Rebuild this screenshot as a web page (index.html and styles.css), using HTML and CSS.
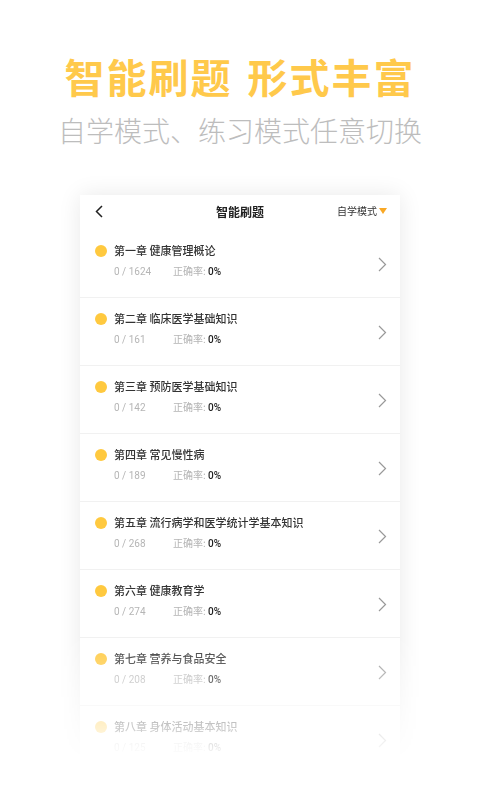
FILE: index.html
```html
<!DOCTYPE html>
<html lang="zh-CN">
<head>
    <meta charset="UTF-8">
    <meta name="viewport" content="width=device-width, initial-scale=1.0">
    <title>智能刷题</title>
    <link rel="stylesheet" href="styles.css">
</head>
<body>
    <p class="headline">智能刷题 形式丰富</p>
    <p class="subline">自学模式、练习模式任意切换</p>
    <div class="fade">
        <div class="card">
            <div class="bar">
                <svg class="back" width="8" height="13" viewBox="0 0 8 13"><path d="M7 1L1.5 6.5L7 12" fill="none" stroke="#222" stroke-width="1.5"/></svg>
                <span class="bar-title">智能刷题</span>
                <span class="mode">自学模式<i class="tri"></i></span>
            </div>
            <div class="row">
                <span class="dot"></span>
                <div class="info">
                    <p class="name">第一章 健康管理概论</p>
                    <p class="stat"><span class="count">0 / 1624</span>正确率: <b>0%</b></p>
                </div>
                <svg class="arrow" width="9" height="15" viewBox="0 0 9 15"><path d="M1 1L7.5 7.5L1 14" fill="none" stroke="#999" stroke-width="1.2"/></svg>
            </div>
            <div class="row">
                <span class="dot"></span>
                <div class="info">
                    <p class="name">第二章 临床医学基础知识</p>
                    <p class="stat"><span class="count">0 / 161</span>正确率: <b>0%</b></p>
                </div>
                <svg class="arrow" width="9" height="15" viewBox="0 0 9 15"><path d="M1 1L7.5 7.5L1 14" fill="none" stroke="#999" stroke-width="1.2"/></svg>
            </div>
            <div class="row">
                <span class="dot"></span>
                <div class="info">
                    <p class="name">第三章 预防医学基础知识</p>
                    <p class="stat"><span class="count">0 / 142</span>正确率: <b>0%</b></p>
                </div>
                <svg class="arrow" width="9" height="15" viewBox="0 0 9 15"><path d="M1 1L7.5 7.5L1 14" fill="none" stroke="#999" stroke-width="1.2"/></svg>
            </div>
            <div class="row">
                <span class="dot"></span>
                <div class="info">
                    <p class="name">第四章 常见慢性病</p>
                    <p class="stat"><span class="count">0 / 189</span>正确率: <b>0%</b></p>
                </div>
                <svg class="arrow" width="9" height="15" viewBox="0 0 9 15"><path d="M1 1L7.5 7.5L1 14" fill="none" stroke="#999" stroke-width="1.2"/></svg>
            </div>
            <div class="row">
                <span class="dot"></span>
                <div class="info">
                    <p class="name">第五章 流行病学和医学统计学基本知识</p>
                    <p class="stat"><span class="count">0 / 268</span>正确率: <b>0%</b></p>
                </div>
                <svg class="arrow" width="9" height="15" viewBox="0 0 9 15"><path d="M1 1L7.5 7.5L1 14" fill="none" stroke="#999" stroke-width="1.2"/></svg>
            </div>
            <div class="row">
                <span class="dot"></span>
                <div class="info">
                    <p class="name">第六章 健康教育学</p>
                    <p class="stat"><span class="count">0 / 274</span>正确率: <b>0%</b></p>
                </div>
                <svg class="arrow" width="9" height="15" viewBox="0 0 9 15"><path d="M1 1L7.5 7.5L1 14" fill="none" stroke="#999" stroke-width="1.2"/></svg>
            </div>
            <div class="row">
                <span class="dot"></span>
                <div class="info">
                    <p class="name">第七章 营养与食品安全</p>
                    <p class="stat"><span class="count">0 / 208</span>正确率: <b>0%</b></p>
                </div>
                <svg class="arrow" width="9" height="15" viewBox="0 0 9 15"><path d="M1 1L7.5 7.5L1 14" fill="none" stroke="#999" stroke-width="1.2"/></svg>
            </div>
            <div class="row">
                <span class="dot"></span>
                <div class="info">
                    <p class="name">第八章 身体活动基本知识</p>
                    <p class="stat"><span class="count">0 / 125</span>正确率: <b>0%</b></p>
                </div>
                <svg class="arrow" width="9" height="15" viewBox="0 0 9 15"><path d="M1 1L7.5 7.5L1 14" fill="none" stroke="#999" stroke-width="1.2"/></svg>
            </div>
        </div>
    </div>
</body>
</html>
```
FILE: styles.css
```css
html,body{
    margin:0;
    height:800px;
    overflow:hidden;
    background:#fff;
}
body{
    font-family:"Noto Sans CJK SC","Noto Sans",sans-serif;
}
p{margin:0;}
.headline{
    padding-top:52px;
    text-align:center;
    font-size:40px;
    line-height:48px;
    font-weight:bold;
    color:#ffc94b;
    letter-spacing:2px;
    word-spacing:4px;
}
.subline{
    margin-top:12px;
    text-align:center;
    font-size:28px;
    line-height:36px;
    font-weight:300;
    color:#bdbdbd;
}
/* 底部渐隐 */
.fade{
    margin-top:23px;
    padding:24px;
    display:flex;
    justify-content:center;
    -webkit-mask-image:linear-gradient(to bottom,#000 464px,transparent 589px);
    mask-image:linear-gradient(to bottom,#000 464px,transparent 589px);
}
.card{
    width:320px;
    background:#fff;
    box-shadow:0 0 22px rgba(0,0,0,0.09);
}
.bar{
    height:35px;
    padding:0 15px;
    display:flex;
    align-items:center;
    position:relative;
}
.back{margin-top:-2px;}
.bar-title{
    position:absolute;
    left:0;right:0;
    top:8px;
    text-align:center;
    font-size:12px;
    line-height:18px;
    font-weight:bold;
    color:#222;
}
.mode{
    margin-left:auto;
    margin-right:-2px;
    font-size:10px;
    line-height:16px;
    color:#333;
    display:flex;
    align-items:center;
    margin-top:-3px;
}
.tri{
    margin-left:2px;
    width:0;height:0;
    border-left:4px solid transparent;
    border-right:4px solid transparent;
    border-top:6px solid #f9a825;
}
.row{
    height:67px;
    border-bottom:1px solid #f1f1f1;
    display:flex;
    align-items:flex-start;
    padding:0 13px 0 15px;
}
.dot{
    width:12px;height:12px;
    margin-top:15px;
    border-radius:50%;
    background:#ffc93f;
    flex:none;
}
.info{
    flex:1;
    margin-left:7px;
    padding-top:13px;
}
.name{
    font-size:11px;
    line-height:14px;
    font-weight:500;
    color:#333;
}
.stat{
    margin-top:7px;
    font-size:10px;
    line-height:14px;
    color:#b5b5b5;
}
.count{
    display:inline-block;
    width:59px;
    font-family:"Roboto","Noto Sans",sans-serif;
}
.stat b{
    font-weight:500;
    color:#222;
    font-family:"Roboto","Noto Sans",sans-serif;
}
.arrow{
    align-self:center;
    margin-top:1px;
}
```
